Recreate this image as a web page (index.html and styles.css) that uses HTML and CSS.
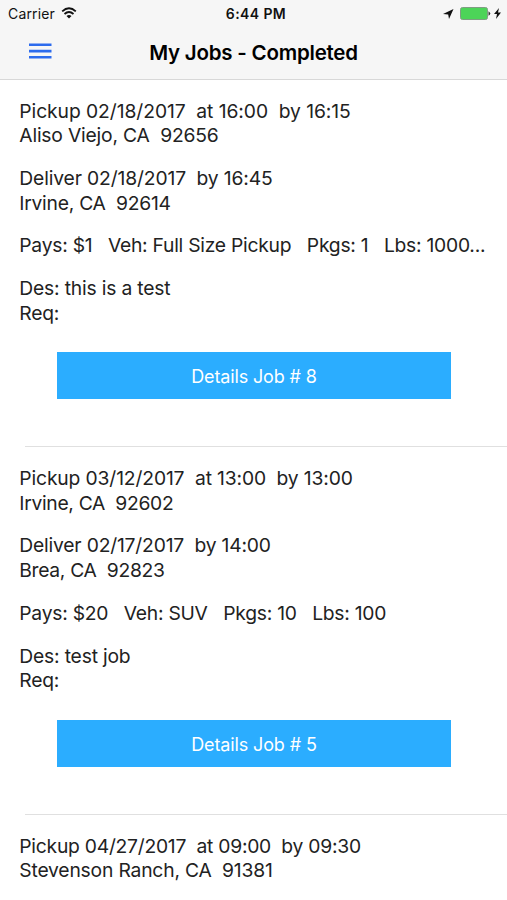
FILE: index.html
```html
<!DOCTYPE html>
<html lang="en">
<head>
<meta charset="utf-8">
<title>My Jobs - Completed</title>
<link rel="stylesheet" href="styles.css">
</head>
<body>
<header class="header">
  <div class="status">
    <div class="status-left"><span class="carrier">Carrier</span>
      <svg class="wifi" width="16" height="12" viewBox="0 0 16 12" fill="none" stroke="#111" stroke-width="1.8"><path d="M1.2 4.4Q8-1.8 14.8 4.4M3.5 7Q8 3 12.5 7"/><path d="M5.5 9Q8 7 10.5 9L8 11.6Z" fill="#111" stroke="none"/></svg>
    </div>
    <span class="time">6:44 PM</span>
    <div class="status-right">
      <svg class="location" width="11" height="10" viewBox="0 0 11 10"><path d="M10.5 0L6 10L5.2 5.4L0 5Z" fill="#111"/></svg>
      <svg class="battery" width="31" height="13" viewBox="0 0 31 13"><rect x=".5" y=".5" width="27" height="12" rx="2" fill="#4cd458" stroke="#7f9d82"/><path d="M28.5 4.2Q32 6.5 28.5 8.8Z" fill="#333"/></svg>
      <svg class="bolt" width="7" height="11" viewBox="0 0 7 11"><path d="M5 0L0 6H3L2 11L7 4.6H4Z" fill="#111"/></svg>
    </div>
  </div>
  <div class="nav">
    <svg class="menu" width="23" height="17" viewBox="0 0 23 17" fill="#2c6bed"><path d="M0 .5h22.5v2.6H0zM0 6.8h22.5v2.6H0zM0 13h22.5v2.6H0z"/></svg>
    <h1 class="title">My Jobs - Completed</h1>
  </div>
</header>
<main class="jobs">
  <article class="job">
    <p><span class="loose">Pickup 02/18/2017&nbsp; at 16:00&nbsp; by 16:15</span><br><span class="medium">Aliso Viejo, CA&nbsp; 92656</span></p>
    <p><span class="wide">Deliver 02/18/2017&nbsp; by 16:45</span><br><span>Irvine, CA&nbsp; 92614</span></p>
    <p><span>Pays: $1&nbsp;&nbsp; Veh: Full Size Pickup&nbsp;&nbsp; Pkgs: 1&nbsp;&nbsp; Lbs: 1000...</span></p>
    <p><span class="medium">Des: this is a test</span><br><span>Req:</span></p>
    <button class="details">Details Job # 8</button>
  </article>
  <article class="job">
    <p><span class="wide">Pickup 03/12/2017&nbsp; at 13:00&nbsp; by 13:00</span><br><span class="tight">Irvine, CA&nbsp; 92602</span></p>
    <p><span class="medium">Deliver 02/17/2017&nbsp; by 14:00</span><br><span class="tight">Brea, CA&nbsp; 92823</span></p>
    <p><span>Pays: $20&nbsp;&nbsp; Veh: SUV&nbsp;&nbsp; Pkgs: 10&nbsp;&nbsp; Lbs: 100</span></p>
    <p><span class="medium">Des: test job</span><br><span>Req:</span></p>
    <button class="details">Details Job # 5</button>
  </article>
  <article class="job last">
    <p><span>Pickup 04/27/2017&nbsp; at 09:00&nbsp; by 09:30</span><br><span class="medium">Stevenson Ranch, CA&nbsp; 91381</span></p>
  </article>
</main>
</body>
</html>
```
FILE: styles.css
```css
* { box-sizing: border-box; }
body { margin: 0; background: #fff; color: #222; font-family: Inter, sans-serif; }
.header { height: 80px; background: #f6f6f6; border-bottom: 1px solid #d8d8d8; }
.status { height: 27px; display: grid; grid-template-columns: 1fr auto 1fr; align-items: center; padding: 0 6px 0 8px; color: #111; }
.status-left, .status-right { display: flex; align-items: center; }
.status-left { gap: 6px; }
.carrier { font-size: 14px; letter-spacing: .15px; }
.wifi { margin-bottom: 2px; }
.status-right { justify-content: flex-end; gap: 3px; }
.location { margin-right: 3px; }
.time { font-weight: 600; font-size: 14px; letter-spacing: .4px; padding-left: 3px; }
.nav { height: 51px; display: grid; grid-template-columns: 52px 1fr 52px; align-items: center; }
.menu { justify-self: end; margin-bottom: 3px; }
.title { margin: 0; text-align: center; font-size: 20.5px; font-weight: 600; letter-spacing: -.22px; color: #000; }
.job { height: 367.7px; padding: 19.2px 20px 0 19.3px; background: linear-gradient(#e0e0e0, #e0e0e0) 25px 100% / 100% 1px no-repeat; }
.job:first-child { height: 367px; padding-top: 18.8px; }
.job.last { height: auto; background: none; }
.job p { margin: 0 0 18.3px; font-size: 19.3px; line-height: 24.5px; letter-spacing: -.25px; white-space: nowrap; }
.job .loose { letter-spacing: -.07px; }
.job .wide { letter-spacing: -.14px; }
.job .medium { letter-spacing: -.19px; }
.job .tight { letter-spacing: -.31px; }
.job.last p { margin: 0; }
.details { display: block; width: 394px; height: 47px; margin: 27px 0 0 37.7px; padding: 2px 0 0; border: 0; background: #2badff; color: #fff; font: 18px Inter, sans-serif; letter-spacing: -.13px; }
```
